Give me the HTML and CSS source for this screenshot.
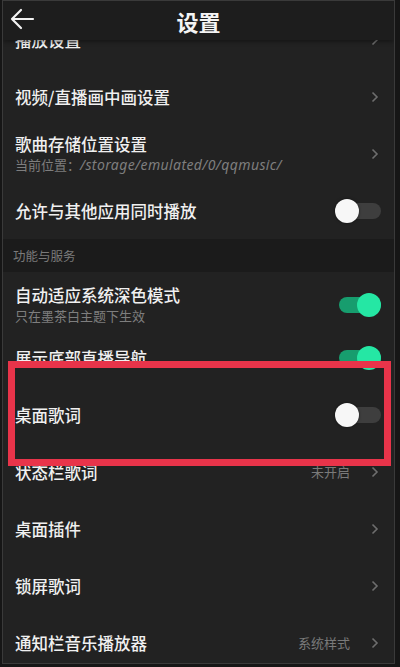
FILE: index.html
```html
<!DOCTYPE html>
<html lang="zh">
<head>
<meta charset="utf-8">
<link rel="stylesheet" href="styles.css">
</head>
<body>
<div class="frame">
  <header class="topbar">
    <svg class="back" width="26" height="22" viewBox="0 0 26 22"><path d="M24 11H3M12 2L3 11l9 9" fill="none" stroke="#f2f2f2" stroke-width="2.2" stroke-linecap="round" stroke-linejoin="round"/></svg>
    <h1 class="title">设置</h1>
  </header>
  <div class="list">
    <div class="row"><div class="text"><div class="name">播放设置</div></div><svg class="chev" width="8" height="12" viewBox="0 0 8 12"><path d="M1.5 1.5L6 6l-4.5 4.5" fill="none" stroke="#6e6e6e" stroke-width="1.6"/></svg></div>
    <div class="row"><div class="text"><div class="name">视频/直播画中画设置</div></div><svg class="chev" width="8" height="12" viewBox="0 0 8 12"><path d="M1.5 1.5L6 6l-4.5 4.5" fill="none" stroke="#6e6e6e" stroke-width="1.6"/></svg></div>
    <div class="row"><div class="text"><div class="name">歌曲存储位置设置</div><div class="sub">当前位置：<i>/storage/emulated/0/qqmusic/</i></div></div><svg class="chev" width="8" height="12" viewBox="0 0 8 12"><path d="M1.5 1.5L6 6l-4.5 4.5" fill="none" stroke="#6e6e6e" stroke-width="1.6"/></svg></div>
    <div class="row"><div class="text"><div class="name">允许与其他应用同时播放</div></div><span class="toggle"><span class="track"></span><span class="knob"></span></span></div>
    <div class="section">功能与服务</div>
    <div class="row shift"><div class="text"><div class="name">自动适应系统深色模式</div><div class="sub">只在墨茶白主题下生效</div></div><span class="toggle on"><span class="track"></span><span class="knob"></span></span></div>
    <div class="row"><div class="text"><div class="name">展示底部直播导航</div></div><span class="toggle on"><span class="track"></span><span class="knob"></span></span></div>
    <div class="row"><div class="text"><div class="name">桌面歌词</div></div><span class="toggle"><span class="track"></span><span class="knob"></span></span></div>
    <div class="row"><div class="text"><div class="name">状态栏歌词</div></div><span class="value">未开启</span><svg class="chev" width="8" height="12" viewBox="0 0 8 12"><path d="M1.5 1.5L6 6l-4.5 4.5" fill="none" stroke="#6e6e6e" stroke-width="1.6"/></svg></div>
    <div class="row"><div class="text"><div class="name">桌面插件</div></div><svg class="chev" width="8" height="12" viewBox="0 0 8 12"><path d="M1.5 1.5L6 6l-4.5 4.5" fill="none" stroke="#6e6e6e" stroke-width="1.6"/></svg></div>
    <div class="row"><div class="text"><div class="name">锁屏歌词</div></div><svg class="chev" width="8" height="12" viewBox="0 0 8 12"><path d="M1.5 1.5L6 6l-4.5 4.5" fill="none" stroke="#6e6e6e" stroke-width="1.6"/></svg></div>
    <div class="row"><div class="text"><div class="name">通知栏音乐播放器</div></div><span class="value">系统样式</span><svg class="chev" width="8" height="12" viewBox="0 0 8 12"><path d="M1.5 1.5L6 6l-4.5 4.5" fill="none" stroke="#6e6e6e" stroke-width="1.6"/></svg></div>
  </div>
  <div class="highlight"></div>
</div>
</body>
</html>
```
FILE: styles.css
```css
* { box-sizing: border-box; }
html, body { margin: 0; padding: 0; }
body {
  background: #161616;
  width: 400px;
  height: 667px;
  overflow: hidden;
  font-family: "Noto Sans CJK SC", "Noto Sans", sans-serif;
  color: #f2f2f2;
}
.frame {
  position: relative;
  margin: 0 5px 0 2px;
  height: 664px;
  border: 1px solid #3a3a3a;
  background: #222222;
  overflow: hidden;
}
.topbar {
  position: relative;
  z-index: 2;
  height: 39px;
  background: #1d1d1d;
  box-shadow: 0 2px 4px rgba(0,0,0,0.35);
  display: flex;
  align-items: center;
  justify-content: center;
}
.back {
  position: absolute;
  left: 6px;
  top: 7px;
}
.title {
  margin: 0;
  font-size: 22px;
  font-weight: 700;
  line-height: 1;
  color: #f4f4f4;
}
.list {
  margin-top: -29px;
}
.row {
  height: 57px;
  display: flex;
  align-items: center;
  padding: 0 15px 0 12px;
}
.row.shift { padding-top: 9px; }
.text { flex: 1; min-width: 0; }
.name {
  font-size: 16.5px;
  line-height: 22px;
  font-weight: 500;
  color: #f0f0f0;
  white-space: nowrap;
}
.sub {
  font-size: 13px;
  line-height: 20px;
  color: #7e7e7e;
  white-space: nowrap;
}
.sub i { font-family: "Noto Sans", sans-serif; font-style: italic; font-size: 14px; letter-spacing: 0.4px; }
.section {
  height: 33px;
  display: flex;
  align-items: center;
  padding-left: 10px;
  font-size: 12.5px;
  color: #7a7a7a;
  background: #1b1b1b;
}
.chev { flex: none; }
.value {
  font-size: 13px;
  color: #7a7a7a;
  margin-right: 21px;
}
.toggle {
  position: relative;
  flex: none;
  width: 46px;
  height: 24px;
  margin-right: -2px;
}
.toggle .track {
  position: absolute;
  left: 4px;
  right: 0;
  top: 4px;
  height: 16px;
  border-radius: 8px;
  background: #3e3e3e;
}
.toggle .knob {
  position: absolute;
  left: 0;
  top: 0;
  width: 24px;
  height: 24px;
  border-radius: 50%;
  background: #f7f7f7;
  box-shadow: 0 0 3px rgba(0,0,0,0.5);
}
.toggle.on .track { background: #179d6e; }
.toggle.on .knob { left: 22px; background: #25e7a4; box-shadow: none; }
.highlight {
  position: absolute;
  z-index: 3;
  left: 5px;
  top: 360px;
  width: 383px;
  height: 105px;
  border: 7px solid #e8344a;
}
```
